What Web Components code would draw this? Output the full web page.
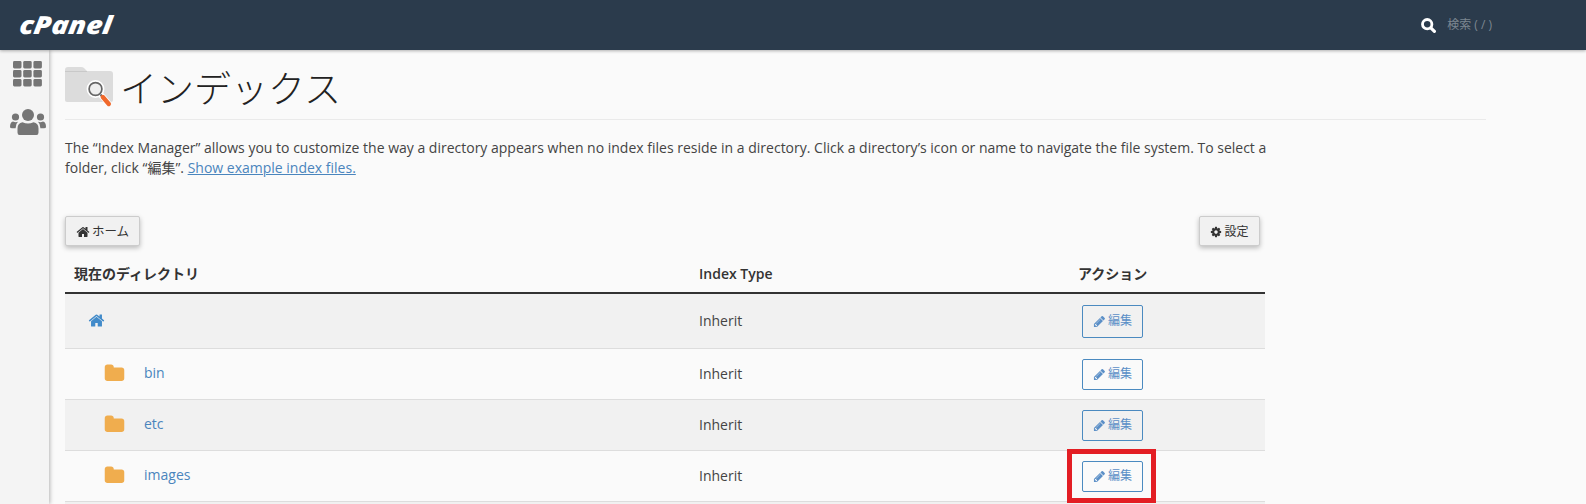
<!DOCTYPE html>
<html lang="ja">
<head>
<meta charset="utf-8">
<title>インデックス</title>
<style>
html, body { margin: 0; height: 504px; overflow: hidden; background: #fafafa; }
body { font: 14px/20px "Open Sans", "Noto Sans CJK JP", sans-serif; color: #333; }
</style>
</head>
<body>
<cp-app></cp-app>

<script>
const PATHS = {
  home: 'M1472 992v480q0 26-19 45t-45 19h-384v-384h-256v384h-384q-26 0-45-19t-19-45v-480q0-1 .5-3t.5-3l575-474 575 474q1 2 1 6zm223-69l-62 74q-8 9-21 11h-3q-13 0-21-7l-692-577-692 577q-12 8-24 7-13-2-21-11l-62-74q-8-10-7-23.5t11-21.5l719-599q32-26 76-26t76 26l244 204v-195q0-14 9-23t23-9h192q14 0 23 9t9 23v408l219 182q10 8 11 21.5t-7 23.5z',
  pencil: 'M491 1536l91-91-235-235-91 91v107h128v128h107zm523-928q0-22-22-22-10 0-17 7l-542 542q-7 7-7 17 0 22 22 22 10 0 17-7l542-542q7-7 7-17zm-54-192l416 416-832 832h-416v-416zm683 96q0 53-37 90l-166 166-416-416 166-165q36-38 90-38 53 0 91 38l235 234q37 39 37 91z',
  folder: 'M1728 608v704q0 92-66 158t-158 66h-1216q-92 0-158-66t-66-158v-960q0-92 66-158t158-66h320q92 0 158 66t66 158v32h672q92 0 158 66t66 158z',
  cog: 'M1152 896q0-106-75-181t-181-75-181 75-75 181 75 181 181 75 181-75 75-181zm512-109v222q0 12-8 23t-20 13l-185 28q-19 54-39 91 35 50 107 138 10 12 10 25t-9 23q-27 37-99 108t-94 71q-12 0-26-9l-138-108q-44 23-91 38-16 136-29 186-7 28-36 28h-222q-14 0-24.5-8.5t-11.5-21.5l-28-184q-49-16-90-37l-141 107q-10 9-25 9-14 0-25-11-126-114-165-168-7-10-7-23 0-12 8-23 15-21 51-66.5t54-70.5q-27-50-41-99l-183-27q-13-2-21-12.5t-8-23.5v-222q0-12 8-23t19-13l186-28q14-46 39-92-40-57-107-138-10-12-10-24 0-10 9-23 26-36 98.5-107.5t94.5-71.5q13 0 26 10l138 107q44-23 91-38 16-136 29-186 7-28 36-28h222q14 0 24.5 8.5t11.5 21.5l28 184q49 16 90 37l142-107q9-9 24-9 13 0 25 10 129 119 165 170 7 8 7 22 0 12-8 23-15 21-51 66.5t-54 70.5q26 50 41 98l183 28q13 2 21 12.5t8 23.5z'
};

class CpIcon extends HTMLElement {
  connectedCallback() {
    const size = this.getAttribute('size') || 14;
    const name = this.getAttribute('name');
    this.attachShadow({mode: 'open'}).innerHTML = `
      <style>:host { display: inline-flex; } svg { display: block; fill: currentColor; }</style>
      <svg width="${size}" height="${size}" viewBox="0 128 1792 1536"><path d="${PATHS[name]}"/></svg>`;
  }
}
customElements.define('cp-icon', CpIcon);

class CpHeader extends HTMLElement {
  connectedCallback() {
    this.attachShadow({mode: 'open'}).innerHTML = `
      <style>
      :host { display: flex; align-items: center; height: 50px; background: #2b3b4c; box-shadow: 0 1px 3px rgba(0,0,0,.3); position: relative; z-index: 2; }
      .logo { margin: 0 0 3px 20px; font: italic 800 25px/30px "Open Sans", sans-serif; color: #fff; transform-origin: left center; transform: skewX(-8deg) scaleX(1.13); }
      .search { margin-left: auto; margin-right: 94px; display: flex; align-items: center; gap: 11px; color: #fff; }
      .search svg { display: block; }
      .search span { font: 12px/16px "Open Sans", "Noto Sans CJK JP", sans-serif; color: #7d8791; white-space: nowrap; }
      </style>
      <div class="logo">cPanel</div>
      <div class="search">
        <svg width="15" height="15" viewBox="0 0 15 15" fill="none" stroke="#fff"><circle cx="6.2" cy="6.2" r="4.7" stroke-width="2.8"/><path d="M9.8 9.8l3.6 3.6" stroke-width="3.2" stroke-linecap="round"/></svg>
        <span>検索 ( / )</span>
      </div>`;
  }
}
customElements.define('cp-header', CpHeader);

class CpSidebar extends HTMLElement {
  connectedCallback() {
    this.attachShadow({mode: 'open'}).innerHTML = `
      <style>
      :host { display: flex; flex-direction: column; align-items: center; gap: 22px; box-sizing: border-box; width: 49px; padding: 11px 0 0 6px; background: #f4f4f4; box-shadow: 1px 0 4px rgba(0,0,0,.28); color: #757575; }
      svg { display: block; fill: currentColor; }
      </style>
      <svg width="29" height="26" viewBox="0 0 29 26">
        <rect x="0" y="0" width="8.5" height="7.4" rx="1.4"/><rect x="10.2" y="0" width="8.5" height="7.4" rx="1.4"/><rect x="20.4" y="0" width="8.5" height="7.4" rx="1.4"/>
        <rect x="0" y="9" width="8.5" height="7.4" rx="1.4"/><rect x="10.2" y="9" width="8.5" height="7.4" rx="1.4"/><rect x="20.4" y="9" width="8.5" height="7.4" rx="1.4"/>
        <rect x="0" y="18" width="8.5" height="7.4" rx="1.4"/><rect x="10.2" y="18" width="8.5" height="7.4" rx="1.4"/><rect x="20.4" y="18" width="8.5" height="7.4" rx="1.4"/>
      </svg>
      <svg width="36" height="26" viewBox="0 0 36 26">
        <circle cx="18" cy="6" r="6"/><circle cx="5.5" cy="8" r="3.6"/><circle cx="30.5" cy="8" r="3.6"/>
        <path d="M9.5 26q-2 0-2-2.5v-4q0-5.5 5-6.2 5.5 2.5 11 0 5 .7 5 6.2v4q0 2.5-2 2.5z"/>
        <path d="M0 18q0-5 3-5.5 2.5 1.3 5 .3-2.4 2-2.4 6.4H2q-2 0-2-1.2z"/>
        <path d="M36 18q0-5-3-5.5-2.5 1.3-5 .3 2.4 2 2.4 6.4H34q2 0 2-1.2z"/>
      </svg>`;
  }
}
customElements.define('cp-sidebar', CpSidebar);

class CpTitle extends HTMLElement {
  connectedCallback() {
    this.attachShadow({mode: 'open'}).innerHTML = `
      <style>
      :host { display: flex; align-items: flex-start; gap: 7px; box-sizing: border-box; height: 70px; width: 1421px; padding-top: 17px; border-bottom: 1px solid #eaeaea; }
      svg { display: block; flex: none; }
      h1 { margin: 0; font: 300 37px/40px "Noto Sans CJK JP", "Open Sans", sans-serif; color: #222; white-space: nowrap; }
      </style>
      <svg width="48" height="41" viewBox="0 0 48 41">
        <path d="M0 3q0-3 3-3h13q2 0 3 1l3 3h23q3 0 3 3v26q0 2-2 2H2q-2 0-2-2z" fill="#dcdcdc"/>
        <path d="M0 4h22v1H0z" fill="#c9c9c9"/>
        <circle cx="30.5" cy="22" r="7.4" fill="#eee" stroke="#fff" stroke-width="3"/>
        <circle cx="30.5" cy="22" r="6.4" fill="none" stroke="#666" stroke-width="1.7"/>
        <path d="M35.5 27.5l8 9" stroke="#fff" stroke-width="6"/>
        <path d="M35.5 27.5l2 2.3" stroke="#666" stroke-width="2"/>
        <path d="M37.8 30l6 7" stroke="#f0692c" stroke-width="4.4" stroke-linecap="round"/>
      </svg>
      <h1><slot></slot></h1>`;
  }
}
customElements.define('cp-title', CpTitle);

class CpButton extends HTMLElement {
  connectedCallback() {
    this.attachShadow({mode: 'open'}).innerHTML = `
      <style>
      :host { display: inline-flex; align-items: center; justify-content: center; gap: 2px; box-sizing: border-box; height: 30px; padding: 2px 10px 0; border: 1px solid #ccc; border-radius: 2px; background: #f1f1f1; color: #333; font-size: 12.5px; line-height: 16px; box-shadow: 0 2px 5px rgba(0,0,0,.26); white-space: nowrap; }
      </style>
      <slot></slot>`;
  }
}
customElements.define('cp-button', CpButton);

class CpEdit extends HTMLElement {
  connectedCallback() {
    this.attachShadow({mode: 'open'}).innerHTML = `
      <style>
      :host { display: inline-flex; align-items: center; justify-content: center; gap: 2px; box-sizing: border-box; width: 61px; height: 31px; border: 1px solid #4b8ac0; border-radius: 2px; color: #5b8fc7; font-size: 12px; line-height: 16px; white-space: nowrap; }
      :host([tall]) { height: 33px; }
      </style>
      <cp-icon name="pencil" size="13"></cp-icon><span>編集</span>`;
  }
}
customElements.define('cp-edit', CpEdit);

class CpRow extends HTMLElement {
  connectedCallback() {
    const name = this.getAttribute('name');
    const first = name === null;
    this.attachShadow({mode: 'open'}).innerHTML = `
      <style>
      :host { display: grid; grid-template-columns: 626px 379px 195px; align-items: center; height: ${first ? 54 : 50}px; border-bottom: 1px solid #ddd; background: ${this.hasAttribute('striped') ? '#f1f1f1' : '#fafafa'}; }
      .dir { display: flex; align-items: center; color: #4a85bd; padding-left: ${first ? 23 : 39}px; margin-top: -1px; }
      .dir cp-icon.h { color: #428bca; }
      .dir cp-icon.f { color: #f0ad4e; margin-right: 19px; }
      .dir span { margin-top: -1px; }
      .type { padding-left: 8px; color: #444; }
      .act { padding-left: 12px; display: flex; }
      </style>
      <div class="dir">${first
        ? '<cp-icon class="h" name="home" size="17"></cp-icon>'
        : `<cp-icon class="f" name="folder" size="21"></cp-icon><span>${name}</span>`}</div>
      <div class="type">Inherit</div>
      <div class="act"><cp-edit ${first ? 'tall' : ''}></cp-edit></div>`;
  }
}
customElements.define('cp-row', CpRow);

class CpTable extends HTMLElement {
  connectedCallback() {
    this.attachShadow({mode: 'open'}).innerHTML = `
      <style>
      :host { display: block; width: 1200px; }
      .head { display: grid; grid-template-columns: 626px 379px 195px; align-items: center; box-sizing: border-box; height: 48px; padding-top: 10px; border-bottom: 2px solid #333; font-weight: 600; color: #333; }
      .head div:first-child { padding-left: 9px; }
      .head div:nth-child(2) { padding-left: 8px; }
      .head div:last-child { padding-left: 8px; }
      .rest { height: 3px; background: #f1f1f1; }
      </style>
      <div class="head"><div>現在のディレクトリ</div><div>Index Type</div><div>アクション</div></div>
      <slot></slot>
      <div class="rest"></div>`;
  }
}
customElements.define('cp-table', CpTable);

class CpApp extends HTMLElement {
  connectedCallback() {
    this.attachShadow({mode: 'open'}).innerHTML = `
      <style>
      :host { display: flex; flex-direction: column; height: 504px; overflow: hidden; position: relative; }
      .body { display: flex; flex: 1; min-height: 0; }
      main { padding-left: 16px; }
      p { width: 1200px; margin: 18px 0 0; color: #444; white-space: nowrap; }
      a { color: #4a85bd; text-decoration: underline; }
      .tools { display: flex; justify-content: space-between; width: 1195px; margin-top: 38px; }
      cp-button.home { width: 75px; }
      cp-button.set { width: 61px; font-size: 12px; }
      .mark { position: absolute; left: 1067px; top: 449px; box-sizing: border-box; width: 89px; height: 54px; border: 5px solid #e31e24; }
      </style>
      <cp-header></cp-header>
      <div class="body">
        <cp-sidebar></cp-sidebar>
        <main>
          <cp-title>インデックス</cp-title>
          <p>The “Index Manager” allows you to customize the way a directory appears when no index files reside in a directory. Click a directory’s icon or name to navigate the file system. To select a<br>folder, click “編集”. <a>Show example index files.</a></p>
          <div class="tools">
            <cp-button class="home"><cp-icon name="home" size="14"></cp-icon>ホーム</cp-button>
            <cp-button class="set"><cp-icon name="cog" size="12"></cp-icon>設定</cp-button>
          </div>
          <cp-table>
            <cp-row striped></cp-row>
            <cp-row name="bin"></cp-row>
            <cp-row striped name="etc"></cp-row>
            <cp-row name="images"></cp-row>
          </cp-table>
        </main>
      </div>
      <div class="mark"></div>`;
  }
}
customElements.define('cp-app', CpApp);
</script>
</body>
</html>
